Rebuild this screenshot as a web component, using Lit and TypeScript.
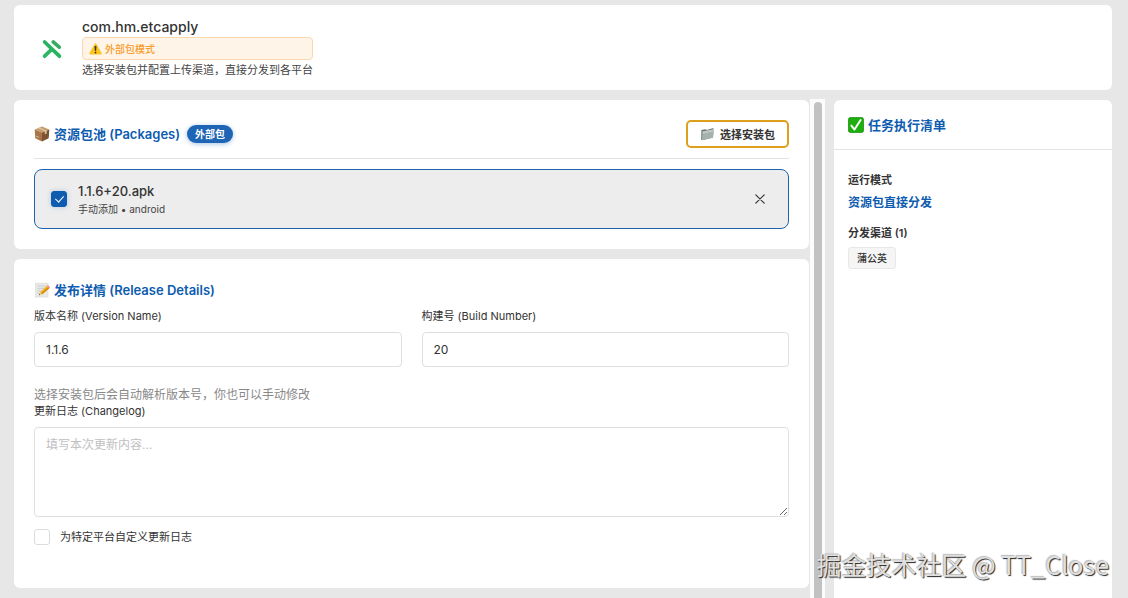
import { LitElement, html, css, svg } from "lit";
import { customElement, state } from "lit/decorators.js";

const logoIcon = svg`
  <svg width="22" height="22" viewBox="0 0 22 22" aria-hidden="true">
    <g fill="none" stroke-width="3.7" stroke-linecap="round" stroke-linejoin="round">
      <path d="M3.6 18.2 L9.8 12.2" stroke="#2fb765"/>
      <path d="M3.6 4 L18.4 18.2" stroke="#27b35f"/>
      <path d="M12.2 3.9 L18.2 9.2" stroke="#35ad63"/>
    </g>
  </svg>`;

const warningIcon = svg`
  <svg width="13" height="12" viewBox="0 0 13 12" aria-hidden="true">
    <path d="M5.6 .9 Q6.5 -.2 7.4 .9 L12.6 9.9 Q13 11.4 11.6 11.5 H1.4 Q0 11.4 .4 9.9 Z" fill="#fcc61f"/>
    <path d="M5.8 3.3 H7.2 L6.9 7.8 H6.1 Z" fill="#3a3020" stroke="#3a3020" stroke-width=".5"/>
    <circle cx="6.5" cy="9.6" r=".9" fill="#3a3020"/>
  </svg>`;

const boxIcon = svg`
  <svg width="16" height="16" viewBox="0 0 16 16" aria-hidden="true">
    <path d="M.7 3.5 L8 6.4 V15.6 L1.3 12.2 Z" fill="#a87548"/>
    <path d="M15.3 3.5 L8 6.4 V15.6 L14.7 12.2 Z" fill="#7e5230"/>
    <path d="M.7 3.5 L8 .6 L15.3 3.5 L8 6.4 Z" fill="#c49a6c"/>
    <path d="M3.6 2.3 L10.8 5.3 V8.4 L12.7 7.5 V4.5 L5.6 1.5 Z" fill="#dcc09a"/>
    <path d="M2.1 10.1 L4.8 11.4" stroke="#dcc09a" stroke-width="1"/>
  </svg>`;

const memoIcon = svg`
  <svg width="16" height="16" viewBox="0 0 16 16" aria-hidden="true">
    <rect x="1.6" y="1.2" width="12.4" height="13.8" fill="#e9e9e7" stroke="#dadada" stroke-width=".7"/>
    <path d="M3.4 4 H12 M3.4 6.4 H11 M3.4 8.8 H8 M3.4 11.2 H6" stroke="#c2c5c8" stroke-width=".8"/>
    <path d="M4.9 13.2 L6.2 9.9 L13 3.7 L15.3 6.2 L8.2 12.2 Z" fill="#f2b822"/>
    <path d="M7.2 11.1 L14.2 4.9 L15.3 6.2 L8.2 12.2 Z" fill="#d9860f"/>
    <path d="M4.9 13.2 L6.2 9.9 L8.2 12.2 Z" fill="#e7c997"/>
    <path d="M4.9 13.2 L5.4 12 L6.2 12.8 Z" fill="#333"/>
    <path d="M13 3.7 L14 2.9 L16 5.4 L15.3 6.2 Z" fill="#e88d86"/>
  </svg>`;

const folderIcon = svg`
  <svg width="15" height="14" viewBox="0 0 15 14" aria-hidden="true">
    <path d="M1.4 3 L5.6 2.2 L6.6 3 L12.6 1.2 L13.6 1.6 L13 10.6 L2 13.2 L1.2 12.6 Z" fill="#667674"/>
    <path d="M2.6 4.6 L13.9 2.2 L12.9 10.8 L1.9 13.3 Z" fill="#a5b1ae"/>
    <path d="M2.6 4.6 L13.9 2.2 L13.6 4.4 L2.4 6.8 Z" fill="#bfc8c5"/>
  </svg>`;

const doneIcon = svg`
  <svg width="16" height="16" viewBox="0 0 16 16" aria-hidden="true">
    <rect x=".4" y=".4" width="15.2" height="15.2" rx="2.4" fill="#1fae10" stroke="#159008" stroke-width=".8"/>
    <path d="M3.4 8.6 L6.5 12.6 L12.6 3" fill="none" stroke="#fff" stroke-width="1.9" stroke-linecap="round" stroke-linejoin="round"/>
  </svg>`;

const closeIcon = svg`
  <svg width="10" height="10" viewBox="0 0 10 10" aria-hidden="true">
    <path d="M.8 .8 L9.2 9.2 M9.2 .8 L.8 9.2" stroke="#333" stroke-width="1.2" stroke-linecap="round"/>
  </svg>`;

@customElement("app-root")
export class AppRoot extends LitElement {
  @state() private picked = true;
  @state() private custom = false;

  static styles = css`
    :host {
      display: block;
      font-family: Inter, "Noto Sans CJK SC", sans-serif;
      color: #333;
      font-size: 12px;
    }
    * { box-sizing: border-box; }
    h1, h2, p { margin: 0; }
    svg { display: block; flex: none; }
    button, input, textarea { font: inherit; color: inherit; }
    .page {
      position: relative;
      display: flex;
      flex-direction: column;
      gap: 9px;
      height: 100vh;
      padding: 5px 16px 0 14px;
      background: #e7e7e7;
      overflow: hidden;
    }
    .card { background: #fff; border-radius: 6px; }
    .top {
      display: flex;
      align-items: center;
      gap: 19px;
      flex: none;
      padding: 12px 27px 9px;
    }
    .intro { display: flex; flex-direction: column; }
    .app-name { font-size: 14px; line-height: 20px; font-weight: 500; }
    .mode {
      display: flex;
      align-items: center;
      gap: 3px;
      height: 23px;
      padding: 0 6px;
      border: 1px solid #fbd7ae;
      border-radius: 4px;
      background: #fff4e8;
      color: #f89c2c;
      font-size: 10px;
      font-weight: 500;
    }
    .lead { font-size: 11px; line-height: 21px; color: #444; }
    .body { display: flex; flex: 1; min-height: 0; }
    .main {
      display: flex;
      flex-direction: column;
      gap: 10px;
      flex: 1;
      min-width: 0;
      padding-top: 1px;
      overflow: hidden;
    }
    .main > .card { flex: none; padding: 20px; }
    .main > .release { padding-bottom: 43px; }
    .track {
      width: 15px;
      flex: none;
      margin: 0 9px 0 1px;
      padding: 3px 3px 0 4px;
      background: #fcfcfc;
    }
    .thumb { height: 100%; border-radius: 4px 4px 0 0; background: #c2c2c2; }
    .title {
      display: flex;
      align-items: center;
      gap: 4px;
      font-size: 13px;
      line-height: 22px;
      font-weight: 600;
      color: #0d5cb0;
    }
    .pool-head {
      display: flex;
      align-items: center;
      justify-content: space-between;
      padding-bottom: 10px;
      border-bottom: 1px solid #e3e3e3;
      margin-bottom: 10px;
    }
    .pill {
      margin-left: 3px;
      padding: 0 8px;
      border-radius: 9px;
      background: #1f65b5;
      box-shadow: 0 1px 5px #1f65b566;
      color: #fff;
      font-size: 10px;
      line-height: 18px;
      font-weight: 700;
    }
    .pick {
      display: flex;
      align-items: center;
      gap: 5px;
      height: 28px;
      padding: 0 12px;
      border: 2px solid #dea01c;
      border-radius: 5px;
      background: #fff;
      font-size: 11px;
      font-weight: 600;
    }
    .package {
      display: flex;
      align-items: center;
      gap: 11px;
      height: 60px;
      padding: 0 16px;
      border: 1px solid #1d63ae;
      border-radius: 8px;
      background: #ededed;
    }
    .tick {
      appearance: none;
      display: grid;
      place-items: center;
      width: 16px;
      height: 16px;
      flex: none;
      margin: 0;
      border: 1px solid #dcdcdc;
      border-radius: 3px;
      background: #fff;
    }
    .tick:checked { border-color: #0d5cb0; background: #0d5cb0; }
    .tick:checked::before {
      content: "";
      width: 4px;
      height: 7px;
      margin-bottom: 2px;
      border: solid #fff;
      border-width: 0 1px 1px 0;
      transform: rotate(42deg);
    }
    .package .tick { box-shadow: 0 0 5px #0d5cb040; }
    .file { flex: 1; min-width: 0; cursor: pointer; }
    .file-name { display: block; font-size: 13px; line-height: 20px; font-weight: 500; }
    .file-meta { display: block; font-size: 10px; line-height: 16px; color: #444; }
    .remove {
      display: grid;
      place-items: center;
      width: 24px;
      height: 24px;
      padding: 0;
      border: 0;
      background: none;
    }
    .fields { display: grid; grid-template-columns: 1fr 1fr; gap: 20px; margin-top: 7px; }
    .label { display: block; margin-bottom: 8px; font-size: 11px; line-height: 16px; }
    .box {
      display: block;
      width: 100%;
      border: 1px solid #dfdfdf;
      border-radius: 4px;
      background: #fff;
      outline-color: #0d5cb0;
    }
    .line { height: 35px; padding: 0 11px; }
    .area { height: 90px; padding: 8px 11px; line-height: 18px; resize: vertical; }
    .box::placeholder { color: #c0c0c0; }
    .hint { margin-top: 19px; line-height: 17px; color: #888; }
    .option {
      display: flex;
      align-items: center;
      gap: 10px;
      margin-top: 12px;
      font-size: 11px;
      line-height: 16px;
    }
    .side { width: 278px; flex: none; margin-top: 1px; border-radius: 6px 6px 0 0; }
    .side-head { padding: 14px 14px 13px; line-height: 22px; border-bottom: 1px solid #e3e3e3; }
    .side-body { padding: 22px 14px; }
    .term { font-size: 11px; line-height: 16px; font-weight: 600; }
    .value { margin: 6px 0 14px; line-height: 17px; font-weight: 600; color: #0d5cb0; }
    .tag {
      display: inline-block;
      margin-top: 6px;
      padding: 0 8px;
      border: 1px solid #e8e8e8;
      border-radius: 3px;
      background: #f5f5f5;
      font-size: 10px;
      font-weight: 500;
      line-height: 20px;
    }
    .watermark {
      position: absolute;
      right: 19px;
      bottom: 16px;
      font-family: "Noto Sans CJK SC", sans-serif;
      font-size: 25px;
      line-height: 36px;
      color: #e0e0e0;
      text-shadow: 1px 1px 1px #222, -1px -1px 1px #bbb;
      white-space: nowrap;
      pointer-events: none;
    }
  `;

  render() {
    return html`
      <div class="page">
        <header class="card top">
          ${logoIcon}
          <div class="intro">
            <h1 class="app-name">com.hm.etcapply</h1>
            <div class="mode">${warningIcon}<span>外部包模式</span></div>
            <p class="lead">选择安装包并配置上传渠道，直接分发到各平台</p>
          </div>
        </header>
        <div class="body">
          <main class="main">
            <section class="card">
              <div class="pool-head">
                <h2 class="title">${boxIcon}<span>资源包池 (Packages)</span><span class="pill">外部包</span></h2>
                <button class="pick" type="button">${folderIcon}<span>选择安装包</span></button>
              </div>
              <div class="package">
                <input class="tick" id="pkg" type="checkbox" .checked=${this.picked}
                  @change=${(e: Event) => (this.picked = (e.target as HTMLInputElement).checked)} />
                <label class="file" for="pkg">
                  <span class="file-name">1.1.6+20.apk</span>
                  <span class="file-meta">手动添加 • android</span>
                </label>
                <button class="remove" type="button" aria-label="移除">${closeIcon}</button>
              </div>
            </section>
            <section class="card release">
              <h2 class="title">${memoIcon}<span>发布详情 (Release Details)</span></h2>
              <div class="fields">
                <div>
                  <label class="label" for="version">版本名称 (Version Name)</label>
                  <input class="box line" id="version" type="text" value="1.1.6" />
                </div>
                <div>
                  <label class="label" for="build">构建号 (Build Number)</label>
                  <input class="box line" id="build" type="text" value="20" />
                </div>
              </div>
              <p class="hint">选择安装包后会自动解析版本号，你也可以手动修改</p>
              <label class="label" for="log">更新日志 (Changelog)</label>
              <textarea class="box area" id="log" placeholder="填写本次更新内容..."></textarea>
              <div class="option">
                <input class="tick" id="custom" type="checkbox" .checked=${this.custom}
                  @change=${(e: Event) => (this.custom = (e.target as HTMLInputElement).checked)} />
                <label for="custom">为特定平台自定义更新日志</label>
              </div>
            </section>
          </main>
          <div class="track" aria-hidden="true"><div class="thumb"></div></div>
          <aside class="card side">
            <div class="side-head"><h2 class="title">${doneIcon}<span>任务执行清单</span></h2></div>
            <div class="side-body">
              <p class="term">运行模式</p>
              <p class="value">资源包直接分发</p>
              <p class="term">分发渠道 (1)</p>
              <span class="tag">蒲公英</span>
            </div>
          </aside>
        </div>
        <div class="watermark">掘金技术社区 @ TT_Close</div>
      </div>
    `;
  }
}
